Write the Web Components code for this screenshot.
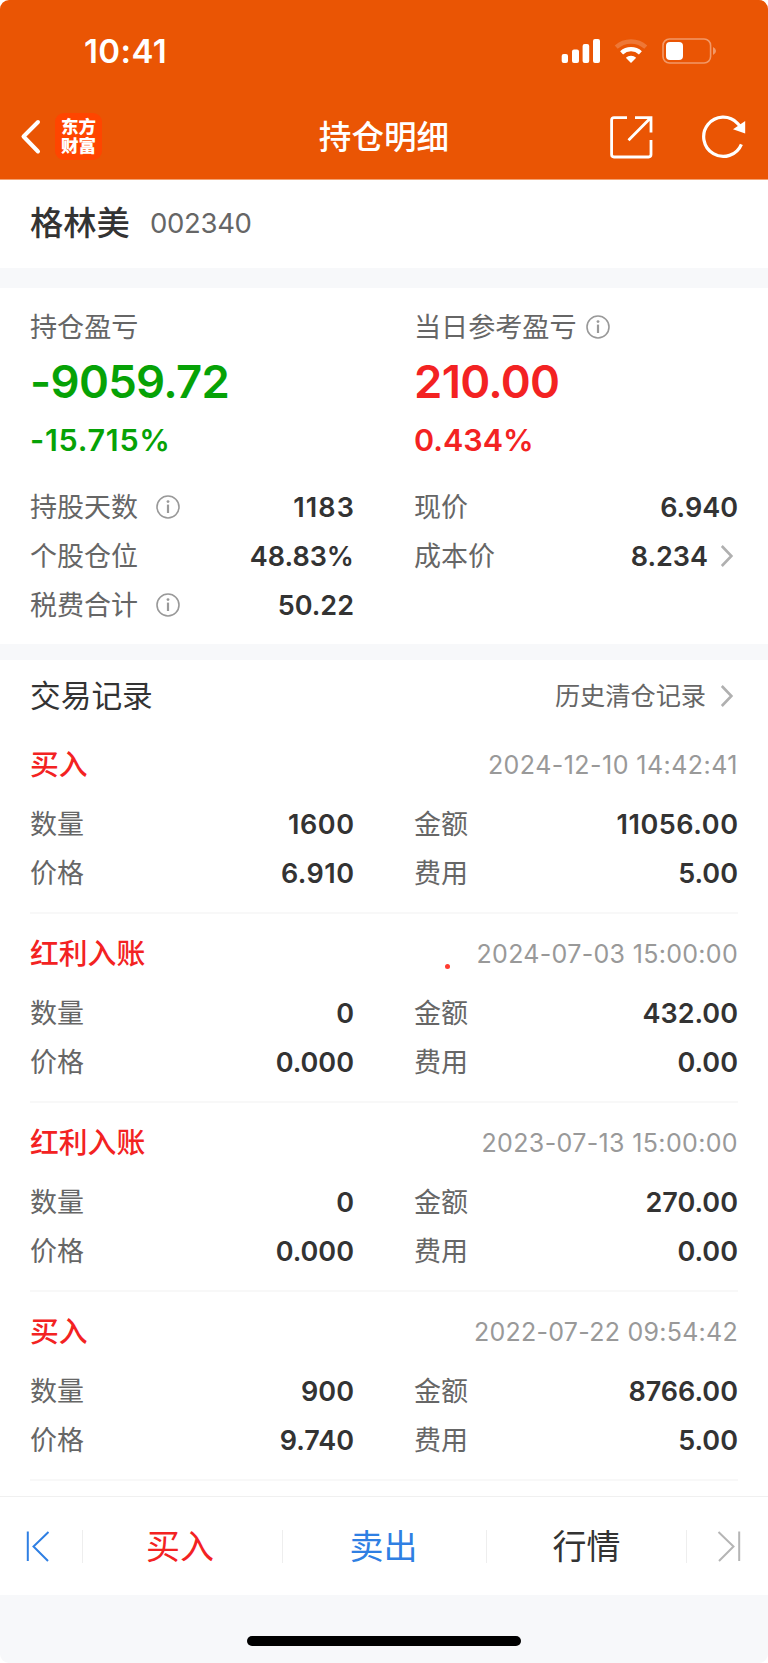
<!DOCTYPE html>
<html lang="zh-CN">
<head>
<meta charset="UTF-8">
<meta name="viewport" content="width=device-width, initial-scale=1.0">
<title>持仓明细</title>
<style>
    body {
        margin: 0;
        background: #fff;
        font-family: Inter, "Noto Sans CJK SC", sans-serif;
        --up: #f32222;
        --down: #06a206;
        --blue: #2f7fe3;
        --text: #333;
        --label: #666;
        --muted: #999;
        --gap-bg: #f7f8fa;
    }
</style>
</head>
<body>
<position-page>
    <app-header slot="header" time="10:41">持仓明细</app-header>
    <stock-name code="002340">格林美</stock-name>
    <profit-summary>
        <profit-head slot="left" label="持仓盈亏" amount="-9059.72" rate="-15.715%" tone="down"></profit-head>
        <data-row slot="left" label="持股天数" value="1183" info></data-row>
        <data-row slot="left" label="个股仓位" value="48.83%"></data-row>
        <data-row slot="left" label="税费合计" value="50.22" info></data-row>
        <profit-head slot="right" label="当日参考盈亏" amount="210.00" rate="0.434%" tone="up" info></profit-head>
        <data-row slot="right" label="现价" value="6.940"></data-row>
        <data-row slot="right" label="成本价" value="8.234" link></data-row>
    </profit-summary>
    <trade-list heading="交易记录" more="历史清仓记录">
        <trade-record type="买入" time="2024-12-10 14:42:41" count="1600" amount="11056.00" price="6.910" fee="5.00"></trade-record>
        <trade-record type="红利入账" time="2024-07-03 15:00:00" count="0" amount="432.00" price="0.000" fee="0.00" dot></trade-record>
        <trade-record type="红利入账" time="2023-07-13 15:00:00" count="0" amount="270.00" price="0.000" fee="0.00"></trade-record>
        <trade-record type="买入" time="2022-07-22 09:54:42" count="900" amount="8766.00" price="9.740" fee="5.00"></trade-record>
    </trade-list>
    <trade-toolbar slot="footer"></trade-toolbar>
</position-page>

<script>
const infoIcon = `
    <svg class="info" width="24" height="24" viewBox="0 0 24 24" fill="none" stroke="#999">
        <circle cx="12" cy="12" r="11" stroke-width="1.6"/>
        <path d="M12 9.6V18" stroke-width="2.2"/>
        <circle cx="12" cy="6.6" r="1.4" fill="#999" stroke="none"/>
    </svg>`;

const chevronIcon = `
    <svg class="chevron" width="14" height="24" viewBox="0 0 14 24" fill="none" stroke="#b0b0b0" stroke-width="2.6">
        <path d="M1.8 2L11.4 12L1.8 22"/>
    </svg>`;

// Inter's "1" is narrow, so numbers with ones in them get some extra letter spacing
function tracking(text, perOne, base = 0) {
    const ones = text.split('1').length - 1;
    return `${(base + ones * perOne / text.length).toFixed(2)}px`;
}

class PositionPage extends HTMLElement {
    constructor() {
        super();
        this.attachShadow({ mode: 'open' });
    }

    connectedCallback() {
        this.shadowRoot.innerHTML = `
            <style>
                :host {
                    display: flex;
                    flex-direction: column;
                    height: 1663px;
                    border-radius: 9px;
                    overflow: hidden;
                    background: #fff;
                }
                main {
                    flex: 1;
                }
            </style>
            <slot name="header"></slot>
            <main><slot></slot></main>
            <slot name="footer"></slot>
        `;
    }
}

class AppHeader extends HTMLElement {
    constructor() {
        super();
        this.attachShadow({ mode: 'open' });
    }

    connectedCallback() {
        this.shadowRoot.innerHTML = `
            <style>
                :host {
                    display: block;
                    height: 179px;
                    background: #ea5504;
                    border-bottom: 1px solid #f3a273;
                    color: #fff;
                }
                .status {
                    display: flex;
                    align-items: center;
                    justify-content: space-between;
                    height: 102px;
                    padding: 0 51px 0 84px;
                }
                .time {
                    font-size: 33px;
                    font-weight: 600;
                    line-height: 40px;
                    letter-spacing: 0.4px;
                }
                .nav {
                    display: grid;
                    grid-template-columns: 1fr auto 1fr;
                    align-items: center;
                    height: 69px;
                }
                .side {
                    display: flex;
                    align-items: center;
                }
                .left {
                    gap: 13px;
                    padding-left: 20px;
                }
                .right {
                    justify-content: flex-end;
                    gap: 48px;
                    padding-right: 21px;
                }
                .logo {
                    box-sizing: border-box;
                    width: 47px;
                    height: 47px;
                    padding-top: 4px;
                    border-radius: 9px;
                    background: #ff4500;
                    font-size: 17.5px;
                    font-weight: 900;
                    line-height: 19px;
                    text-align: center;
                }
                .title {
                    font-size: 32.6px;
                    font-weight: 500;
                    line-height: 40px;
                }
            </style>
            <div class="status">
                <span class="time">${this.getAttribute('time')}</span>
                <svg width="156" height="28" viewBox="0 0 156 28" fill="#fff">
                    <rect x="0.7" y="17" width="6.3" height="9" rx="2"/>
                    <rect x="11" y="12.5" width="7" height="13.5" rx="2"/>
                    <rect x="21.6" y="7" width="6.6" height="19" rx="2"/>
                    <rect x="32" y="2" width="7" height="24" rx="2"/>
                    <g fill="none" stroke="#fff" stroke-width="4.4">
                        <path d="M55.2 10.2A22 22 0 0 1 84.8 10.2" opacity="0.2"/>
                        <path d="M60.6 15.8A14 14 0 0 1 79.4 15.8"/>
                    </g>
                    <path d="M70 26L64.8 20.8A7.4 7.4 0 0 1 75.2 20.8Z"/>
                    <rect x="102" y="2" width="47.6" height="24" rx="6.5" fill="none" stroke="#fff" stroke-width="1.6" opacity="0.4"/>
                    <rect x="105" y="5" width="17" height="18" rx="4"/>
                    <path d="M152 10Q155 11.5 155 14T152 18Z" opacity="0.4"/>
                </svg>
            </div>
            <div class="nav">
                <div class="side left">
                    <svg width="22" height="36" viewBox="0 0 22 36" fill="none" stroke="#fff" stroke-width="4" stroke-linecap="round" stroke-linejoin="round">
                        <path d="M18 3L3.5 17.5L18 32.5"/>
                    </svg>
                    <div class="logo">东方<br>财富</div>
                </div>
                <div class="title"><slot></slot></div>
                <div class="side right">
                    <svg width="44" height="44" viewBox="0 0 44 44" fill="none" stroke="#fff" stroke-width="2.8">
                        <path d="M18 2.6H5Q2.6 2.6 2.6 5V39.6Q2.6 42 5 42H39.6Q42 42 42 39.6V25"/>
                        <path d="M26 2.6H42V17.5M41.5 3L19.5 25.2"/>
                    </svg>
                    <svg width="46" height="44" viewBox="0 0 46 44">
                        <path d="M40.4 29.3A19.6 19.6 0 1 1 36.5 8.3L39 11" fill="none" stroke="#fff" stroke-width="3.2"/>
                        <path d="M44.2 6V18.4L32 14.2Z" fill="#fff"/>
                    </svg>
                </div>
            </div>
        `;
    }
}

class StockName extends HTMLElement {
    constructor() {
        super();
        this.attachShadow({ mode: 'open' });
    }

    connectedCallback() {
        this.shadowRoot.innerHTML = `
            <style>
                :host {
                    display: flex;
                    align-items: center;
                    gap: 20px;
                    height: 86px;
                    padding: 0 30px 2px;
                    line-height: 40px;
                }
                .name {
                    font-size: 33.3px;
                    font-weight: 500;
                    color: var(--text);
                }
                .code {
                    font-size: 27.5px;
                    letter-spacing: -0.3px;
                    color: var(--label);
                }
            </style>
            <span class="name"><slot></slot></span>
            <span class="code">${this.getAttribute('code')}</span>
        `;
    }
}

class ProfitSummary extends HTMLElement {
    constructor() {
        super();
        this.attachShadow({ mode: 'open' });
    }

    connectedCallback() {
        this.shadowRoot.innerHTML = `
            <style>
                :host {
                    display: grid;
                    grid-template-columns: 1fr 1fr;
                    column-gap: 60px;
                    padding: 19px 30px 15px;
                    border-top: 20px solid var(--gap-bg);
                    border-bottom: 16px solid var(--gap-bg);
                }
            </style>
            <div><slot name="left"></slot></div>
            <div><slot name="right"></slot></div>
        `;
    }
}

class ProfitHead extends HTMLElement {
    constructor() {
        super();
        this.attachShadow({ mode: 'open' });
    }

    connectedCallback() {
        const info = this.hasAttribute('info') ? infoIcon : '';
        const rate = this.getAttribute('rate');

        this.shadowRoot.innerHTML = `
            <style>
                :host {
                    display: block;
                    margin-bottom: 18px;
                    font-weight: 600;
                }
                .label {
                    display: flex;
                    align-items: center;
                    gap: 9px;
                    height: 40px;
                    margin-bottom: 1px;
                    font-size: 27.1px;
                    font-weight: 400;
                    line-height: 40px;
                    color: var(--label);
                }
                .label span {
                    padding-top: 2px;
                }
                .amount {
                    font-size: 45.5px;
                    line-height: 68px;
                    letter-spacing: -0.7px;
                    color: var(--${this.getAttribute('tone')});
                }
                .rate {
                    font-size: 30.5px;
                    line-height: 48px;
                    letter-spacing: ${tracking(rate, 2.9)};
                    color: var(--${this.getAttribute('tone')});
                }
            </style>
            <div class="label"><span>${this.getAttribute('label')}</span>${info}</div>
            <div class="amount">${this.getAttribute('amount')}</div>
            <div class="rate">${rate}</div>
        `;
    }
}

class DataRow extends HTMLElement {
    constructor() {
        super();
        this.attachShadow({ mode: 'open' });
    }

    connectedCallback() {
        const value = this.getAttribute('value');
        const spacing = tracking(value, 2.3);
        const info = this.hasAttribute('info') ? infoIcon : '';
        const link = this.hasAttribute('link') ? chevronIcon : '';

        this.shadowRoot.innerHTML = `
            <style>
                :host {
                    display: flex;
                    align-items: center;
                    height: 48px;
                    padding-top: 1px;
                    line-height: 40px;
                }
                .label {
                    padding-top: 2px;
                    font-size: 27px;
                    color: var(--label);
                }
                .info {
                    margin-left: 18px;
                }
                .value {
                    margin-left: auto;
                    margin-right: -${spacing};
                    padding-top: 2px;
                    font-size: 27px;
                    font-weight: 600;
                    letter-spacing: ${spacing};
                    color: var(--text);
                }
                .chevron {
                    margin: 0 4px 0 12px;
                }
            </style>
            <span class="label">${this.getAttribute('label')}</span>${info}
            <span class="value">${value}</span>${link}
        `;
    }
}

class TradeList extends HTMLElement {
    constructor() {
        super();
        this.attachShadow({ mode: 'open' });
    }

    connectedCallback() {
        this.shadowRoot.innerHTML = `
            <style>
                :host {
                    display: block;
                    padding: 0 30px;
                }
                header {
                    display: flex;
                    align-items: center;
                    height: 59px;
                    padding-top: 6px;
                    line-height: 40px;
                }
                h2 {
                    margin: 0 auto 0 0;
                    font-size: 30.7px;
                    font-weight: 400;
                    color: var(--text);
                }
                .more {
                    font-size: 25.2px;
                    color: var(--label);
                }
                .chevron {
                    margin: 0 4px 0 14px;
                }
            </style>
            <header>
                <h2>${this.getAttribute('heading')}</h2>
                <span class="more">${this.getAttribute('more')}</span>${chevronIcon}
            </header>
            <slot></slot>
        `;
    }
}

class TradeRecord extends HTMLElement {
    constructor() {
        super();
        this.attachShadow({ mode: 'open' });
    }

    connectedCallback() {
        const time = this.getAttribute('time');
        const dot = this.hasAttribute('dot') ? '<i class="dot"></i>' : '';

        this.shadowRoot.innerHTML = `
            <style>
                :host {
                    display: block;
                    position: relative;
                    padding: 15px 0;
                    border-bottom: 2px solid #f8f8f8;
                }
                .top {
                    display: flex;
                    align-items: center;
                    justify-content: space-between;
                    height: 49px;
                    margin-bottom: 10px;
                    line-height: 40px;
                }
                .type {
                    font-size: 28.8px;
                    font-weight: 500;
                    color: var(--up);
                }
                .time {
                    font-size: 25px;
                    letter-spacing: ${tracking(time, 0.95, 0.26)};
                    color: var(--muted);
                }
                .grid {
                    display: grid;
                    grid-template-columns: 1fr 1fr;
                    column-gap: 60px;
                }
                /* unread marker, floats over the row */
                .dot {
                    position: absolute;
                    left: 415px;
                    top: 50px;
                    width: 5px;
                    height: 5px;
                    border-radius: 50%;
                    background: #ff3b30;
                }
            </style>
            <div class="top">
                <span class="type">${this.getAttribute('type')}</span>
                <span class="time">${time}</span>
            </div>
            <div class="grid">
                <data-row label="数量" value="${this.getAttribute('count')}"></data-row>
                <data-row label="金额" value="${this.getAttribute('amount')}"></data-row>
                <data-row label="价格" value="${this.getAttribute('price')}"></data-row>
                <data-row label="费用" value="${this.getAttribute('fee')}"></data-row>
            </div>
            ${dot}
        `;
    }
}

class TradeToolbar extends HTMLElement {
    constructor() {
        super();
        this.attachShadow({ mode: 'open' });
    }

    connectedCallback() {
        this.shadowRoot.innerHTML = `
            <style>
                :host {
                    display: block;
                    border-top: 1px solid #f0f0f0;
                }
                .bar {
                    display: grid;
                    grid-template-columns: 83px 200px 204px 200px 81px;
                    align-items: center;
                    height: 98px;
                }
                .bar > * {
                    display: flex;
                    align-items: center;
                    justify-content: center;
                    box-sizing: border-box;
                    height: 33px;
                    border-right: 1px solid #eee;
                    font-size: 34px;
                    line-height: 33px;
                }
                .bar > :last-child {
                    border-right: none;
                }
                .bar > .first {
                    padding-right: 6px;
                }
                .bar > .last {
                    padding-left: 3px;
                }
                .buy {
                    padding-right: 5px;
                    color: var(--up);
                }
                .sell {
                    padding-right: 2px;
                    color: var(--blue);
                }
                .quote {
                    color: var(--text);
                }
                .home {
                    display: flex;
                    align-items: flex-end;
                    justify-content: center;
                    box-sizing: border-box;
                    height: 68px;
                    padding-bottom: 17px;
                    background: var(--gap-bg);
                }
                .home i {
                    width: 274px;
                    height: 10px;
                    border-radius: 5px;
                    background: #000;
                }
            </style>
            <div class="bar">
                <div class="first">
                    <svg width="24" height="32" viewBox="0 0 24 32" fill="none" stroke="#2f7fe3" stroke-width="2">
                        <path d="M1.8 1.5V31M22.5 2L7.5 16.5L22 31"/>
                    </svg>
                </div>
                <div class="buy">买入</div>
                <div class="sell">卖出</div>
                <div class="quote">行情</div>
                <div class="last">
                    <svg width="24" height="32" viewBox="0 0 24 32" fill="none" stroke="#b5b5b5" stroke-width="2">
                        <path d="M22.2 1.5V31M1.5 2L16.5 16.5L2 31"/>
                    </svg>
                </div>
            </div>
            <div class="home"><i></i></div>
        `;
    }
}

customElements.define('position-page', PositionPage);
customElements.define('app-header', AppHeader);
customElements.define('stock-name', StockName);
customElements.define('profit-summary', ProfitSummary);
customElements.define('profit-head', ProfitHead);
customElements.define('data-row', DataRow);
customElements.define('trade-list', TradeList);
customElements.define('trade-record', TradeRecord);
customElements.define('trade-toolbar', TradeToolbar);
</script>
</body>
</html>
